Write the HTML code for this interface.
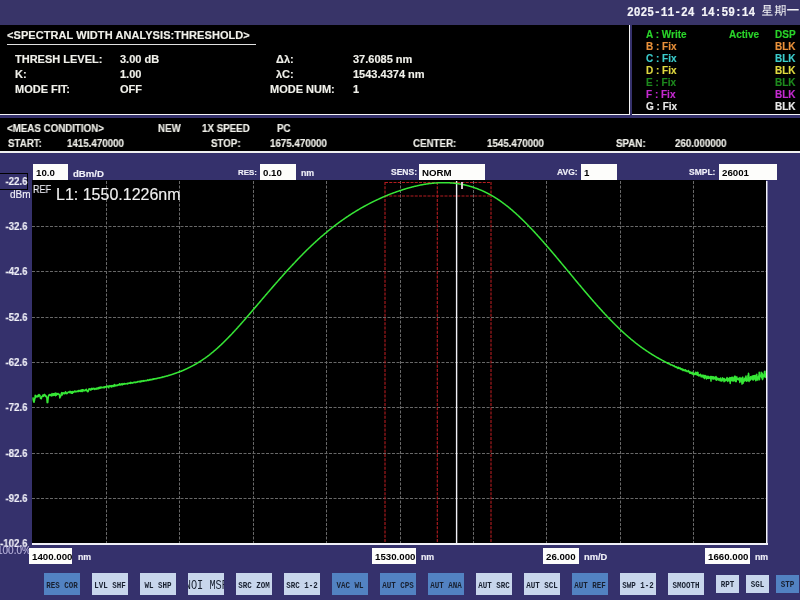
<!DOCTYPE html>
<html><head><meta charset="utf-8"><style>
html,body{margin:0;padding:0}
body{width:800px;height:600px;position:relative;overflow:hidden;background:#35316c;font-family:"Liberation Sans",sans-serif}
.t{position:absolute;white-space:nowrap;line-height:1.15;will-change:transform;-webkit-text-stroke:0.15px currentColor}
.box{position:absolute;will-change:transform;background:#fdfdfb;color:#000;font-weight:bold;padding-left:3px;box-sizing:border-box;white-space:nowrap;overflow:hidden}
.btn{position:absolute;will-change:transform;box-sizing:border-box;text-align:center;line-height:25px;font-family:"Liberation Mono",monospace;font-size:9.5px;font-weight:bold;color:#182030;white-space:nowrap;overflow:hidden}
.btn span{display:inline-block;transform:scaleX(0.79);transform-origin:50% 50%;margin:0 -20px}
</style></head><body>
<div style="position:absolute;left:0;top:0;width:800px;height:25px;background:#383468"></div>
<div class="t" style="left:626.5px;top:6px;font-size:11.25px;color:#f4f4f8;font-weight:bold;font-family:'Liberation Mono',monospace;transform:scaleY(1.1);transform-origin:0 0;">2025-11-24 14:59:14</div>
<svg style="position:absolute;left:761px;top:5px" width="40" height="12" viewBox="0 0 40 12">
<g fill="#f2f2f6">
<rect x="2.8" y="0.1" width="1" height="4.2"/><rect x="8.5" y="0.1" width="1" height="4.2"/>
<rect x="2.8" y="0.1" width="6.7" height="0.9"/><rect x="2.8" y="1.7" width="6.7" height="0.8"/><rect x="2.8" y="3.5" width="6.7" height="0.9"/>
<path d="M2.6 4.7 L3.6 5.0 L2.2 7.4 L1.3 7.0 Z"/>
<rect x="2.3" y="5.3" width="8.2" height="0.8"/><rect x="3" y="7.1" width="7" height="0.8"/><rect x="1.1" y="9.5" width="10.5" height="1.1"/>
<rect x="5.6" y="5" width="1" height="5"/>
<rect x="14.9" y="0.1" width="0.9" height="8.6"/><rect x="18.4" y="0.1" width="0.9" height="8.6"/>
<rect x="14.2" y="1.4" width="5.8" height="0.9"/><rect x="15.5" y="3.4" width="3" height="0.8"/><rect x="15.5" y="5.1" width="3" height="0.8"/><rect x="13.7" y="6.8" width="6.6" height="0.9"/>
<path d="M15.0 8.6 L15.9 8.8 L14.6 10.7 L13.8 10.3 Z"/><path d="M18.3 8.7 L19.1 8.5 L20.0 10.2 L19.2 10.6 Z"/>
<path d="M20.7 0.3 L21.6 0.3 L21.6 7.5 L20.5 10.9 L19.7 10.6 L20.7 7.4 Z"/>
<rect x="23.6" y="0.3" width="0.95" height="10.5"/>
<rect x="20.7" y="0.3" width="3.8" height="0.9"/><rect x="21.2" y="3.7" width="3" height="0.8"/><rect x="21.2" y="6.0" width="3" height="0.8"/>
<rect x="26.1" y="4.0" width="11.6" height="1.5"/>
</g></svg>
<div style="position:absolute;left:0;top:25px;width:629px;height:89px;background:#000"></div>
<div style="position:absolute;left:629px;top:25px;width:1px;height:90px;background:#f4f4f4"></div>
<div style="position:absolute;left:0;top:114px;width:630px;height:1px;background:#f4f4f4"></div>
<div style="position:absolute;left:632px;top:25px;width:168px;height:89px;background:#000"></div>
<div style="position:absolute;left:632px;top:114px;width:168px;height:1px;background:#f4f4f4"></div>
<div class="t" style="left:7px;top:28.5px;font-size:11px;color:#f0f0ea;font-weight:bold;letter-spacing:0.07px;">&lt;SPECTRAL WIDTH ANALYSIS:THRESHOLD&gt;</div>
<div style="position:absolute;left:7px;top:44px;width:249px;height:1px;background:#e0e0e0"></div>
<div class="t" style="left:15px;top:53px;font-size:11px;color:#f0f0ea;font-weight:bold;">THRESH LEVEL:</div>
<div class="t" style="left:120px;top:53px;font-size:11px;color:#f0f0ea;font-weight:bold;">3.00 dB</div>
<div class="t" style="left:15px;top:68px;font-size:11px;color:#f0f0ea;font-weight:bold;">K:</div>
<div class="t" style="left:120px;top:68px;font-size:11px;color:#f0f0ea;font-weight:bold;">1.00</div>
<div class="t" style="left:15px;top:83px;font-size:11px;color:#f0f0ea;font-weight:bold;">MODE FIT:</div>
<div class="t" style="left:120px;top:83px;font-size:11px;color:#f0f0ea;font-weight:bold;">OFF</div>
<div class="t" style="left:276px;top:53px;font-size:11px;color:#f0f0ea;font-weight:bold;">&Delta;&lambda;:</div>
<div class="t" style="left:353px;top:53px;font-size:11px;color:#f0f0ea;font-weight:bold;">37.6085 nm</div>
<div class="t" style="left:276px;top:68px;font-size:11px;color:#f0f0ea;font-weight:bold;">&lambda;C:</div>
<div class="t" style="left:353px;top:68px;font-size:11px;color:#f0f0ea;font-weight:bold;">1543.4374 nm</div>
<div class="t" style="left:270px;top:83px;font-size:11px;color:#f0f0ea;font-weight:bold;">MODE NUM:</div>
<div class="t" style="left:353px;top:83px;font-size:11px;color:#f0f0ea;font-weight:bold;">1</div>
<div class="t" style="left:646px;top:28.8px;font-size:10px;color:#2ad42a;font-weight:bold;">A : Write</div>
<div class="t" style="left:774.5px;top:28.8px;font-size:10px;color:#2ad42a;font-weight:bold;">DSP</div>
<div class="t" style="left:646px;top:40.8px;font-size:10px;color:#e8903a;font-weight:bold;">B : Fix</div>
<div class="t" style="left:774.5px;top:40.8px;font-size:10px;color:#e8903a;font-weight:bold;">BLK</div>
<div class="t" style="left:646px;top:52.8px;font-size:10px;color:#3ccccc;font-weight:bold;">C : Fix</div>
<div class="t" style="left:774.5px;top:52.8px;font-size:10px;color:#3ccccc;font-weight:bold;">BLK</div>
<div class="t" style="left:646px;top:64.8px;font-size:10px;color:#e0d840;font-weight:bold;">D : Fix</div>
<div class="t" style="left:774.5px;top:64.8px;font-size:10px;color:#e0d840;font-weight:bold;">BLK</div>
<div class="t" style="left:646px;top:76.8px;font-size:10px;color:#1e8a1e;font-weight:bold;">E : Fix</div>
<div class="t" style="left:774.5px;top:76.8px;font-size:10px;color:#1e8a1e;font-weight:bold;">BLK</div>
<div class="t" style="left:646px;top:88.8px;font-size:10px;color:#c42ad0;font-weight:bold;">F : Fix</div>
<div class="t" style="left:774.5px;top:88.8px;font-size:10px;color:#c42ad0;font-weight:bold;">BLK</div>
<div class="t" style="left:646px;top:100.8px;font-size:10px;color:#e8e8e8;font-weight:bold;">G : Fix</div>
<div class="t" style="left:774.5px;top:100.8px;font-size:10px;color:#e8e8e8;font-weight:bold;">BLK</div>
<div class="t" style="left:729px;top:28.8px;font-size:10px;color:#2ad42a;font-weight:bold;">Active</div>
<div style="position:absolute;left:0;top:118px;width:800px;height:33px;background:#000"></div>
<div style="position:absolute;left:0;top:151px;width:800px;height:1.5px;background:#f0f0f0"></div>
<div class="t" style="left:7px;top:121.5px;font-size:10.6px;color:#f0f0ea;font-weight:bold;transform:scaleX(0.92);transform-origin:0 0;">&lt;MEAS CONDITION&gt;</div>
<div class="t" style="left:158px;top:121.5px;font-size:10.6px;color:#f0f0ea;font-weight:bold;transform:scaleX(0.92);transform-origin:0 0;">NEW</div>
<div class="t" style="left:202px;top:121.5px;font-size:10.6px;color:#f0f0ea;font-weight:bold;transform:scaleX(0.92);transform-origin:0 0;">1X SPEED</div>
<div class="t" style="left:277px;top:121.5px;font-size:10.6px;color:#f0f0ea;font-weight:bold;transform:scaleX(0.92);transform-origin:0 0;">PC</div>
<div class="t" style="left:8px;top:137.0px;font-size:10.6px;color:#f0f0ea;font-weight:bold;transform:scaleX(0.92);transform-origin:0 0;">START:</div>
<div class="t" style="left:67px;top:137.0px;font-size:10.6px;color:#f0f0ea;font-weight:bold;transform:scaleX(0.92);transform-origin:0 0;">1415.470000</div>
<div class="t" style="left:211px;top:137.0px;font-size:10.6px;color:#f0f0ea;font-weight:bold;transform:scaleX(0.92);transform-origin:0 0;">STOP:</div>
<div class="t" style="left:270px;top:137.0px;font-size:10.6px;color:#f0f0ea;font-weight:bold;transform:scaleX(0.92);transform-origin:0 0;">1675.470000</div>
<div class="t" style="left:413px;top:137.0px;font-size:10.6px;color:#f0f0ea;font-weight:bold;transform:scaleX(0.92);transform-origin:0 0;">CENTER:</div>
<div class="t" style="left:487px;top:137.0px;font-size:10.6px;color:#f0f0ea;font-weight:bold;transform:scaleX(0.92);transform-origin:0 0;">1545.470000</div>
<div class="t" style="left:616px;top:137.0px;font-size:10.6px;color:#f0f0ea;font-weight:bold;transform:scaleX(0.92);transform-origin:0 0;">SPAN:</div>
<div class="t" style="left:675px;top:137.0px;font-size:10.6px;color:#f0f0ea;font-weight:bold;transform:scaleX(0.92);transform-origin:0 0;">260.000000</div>
<div class="box" style="left:33px;top:164px;width:35px;height:16px;font-size:9.7px;line-height:17.5px">10.0</div>
<div class="t" style="left:73px;top:168px;font-size:9.6px;color:#f0f0f8;font-weight:bold;">dBm/D</div>
<div class="t" style="left:238px;top:168px;font-size:7.9px;color:#f0f0f8;font-weight:bold;">RES:</div>
<div class="box" style="left:260px;top:164px;width:36px;height:16px;font-size:9.7px;line-height:17.5px">0.10</div>
<div class="t" style="left:301px;top:168px;font-size:8.8px;color:#f0f0f8;font-weight:bold;">nm</div>
<div class="t" style="left:391px;top:168px;font-size:8.5px;color:#f0f0f8;font-weight:bold;">SENS:</div>
<div class="box" style="left:419px;top:164px;width:66px;height:16px;font-size:9.7px;line-height:17.5px">NORM</div>
<div class="t" style="left:557px;top:168px;font-size:8.5px;color:#f0f0f8;font-weight:bold;">AVG:</div>
<div class="box" style="left:581px;top:164px;width:36px;height:16px;font-size:9.7px;line-height:17.5px">1</div>
<div class="t" style="left:689px;top:168px;font-size:8.5px;color:#f0f0f8;font-weight:bold;">SMPL:</div>
<div class="box" style="left:719px;top:164px;width:58px;height:16px;font-size:9.7px;line-height:17.5px">26001</div>
<div style="position:absolute;left:32px;top:180px;width:734px;height:363px;background:#000"></div>
<svg style="position:absolute;left:0;top:0" width="800" height="600">
<g stroke="#686868" stroke-width="1" stroke-dasharray="3 1.5" fill="none"><line x1="106.5" y1="181" x2="106.5" y2="543"/><line x1="179.5" y1="181" x2="179.5" y2="543"/><line x1="253.5" y1="181" x2="253.5" y2="543"/><line x1="326.5" y1="181" x2="326.5" y2="543"/><line x1="400.5" y1="181" x2="400.5" y2="543"/><line x1="473.5" y1="181" x2="473.5" y2="543"/><line x1="546.5" y1="181" x2="546.5" y2="543"/><line x1="620.5" y1="181" x2="620.5" y2="543"/><line x1="693.5" y1="181" x2="693.5" y2="543"/><line x1="32" y1="226.5" x2="766" y2="226.5"/><line x1="32" y1="271.5" x2="766" y2="271.5"/><line x1="32" y1="317.5" x2="766" y2="317.5"/><line x1="32" y1="362.5" x2="766" y2="362.5"/><line x1="32" y1="407.5" x2="766" y2="407.5"/><line x1="32" y1="453.5" x2="766" y2="453.5"/><line x1="32" y1="498.5" x2="766" y2="498.5"/></g>
<g stroke="#b41c20" stroke-width="1.1" stroke-dasharray="3 1.25" fill="none">
<line x1="385" y1="182.5" x2="491" y2="182.5"/><line x1="385" y1="196" x2="491" y2="196"/>
<line x1="385" y1="182" x2="385" y2="543"/><line x1="437.3" y1="182" x2="437.3" y2="543"/><line x1="491" y1="182" x2="491" y2="543"/>
</g>
<line x1="456.6" y1="181" x2="456.6" y2="543" stroke="#f0f0f6" stroke-width="1.4"/>
<polyline points="33.0,397.4 33.2,399.6 33.5,401.1 33.8,401.4 34.0,402.3 34.2,401.4 34.5,400.5 34.8,398.3 35.0,397.8 35.2,395.2 35.5,397.7 35.8,396.3 36.0,396.9 36.2,396.2 36.5,396.0 36.8,396.6 37.0,396.9 37.2,396.1 37.5,396.1 37.8,396.7 38.0,395.5 38.2,395.0 38.5,396.4 38.8,395.6 39.0,394.6 39.2,395.4 39.5,395.7 39.8,395.2 40.0,395.3 40.2,396.9 40.5,398.4 40.8,398.4 41.0,398.3 41.2,398.8 41.5,398.2 41.8,396.5 42.0,396.6 42.2,396.6 42.5,395.6 42.8,395.1 43.0,395.9 43.2,395.8 43.5,396.4 43.8,394.7 44.0,395.1 44.2,394.9 44.5,394.3 44.8,395.6 45.0,395.8 45.2,394.9 45.5,396.4 45.8,396.0 46.0,395.9 46.2,396.0 46.5,397.0 46.8,396.9 47.0,400.5 47.2,402.7 47.5,402.0 47.8,402.5 48.0,399.8 48.2,398.2 48.5,395.8 48.8,395.4 49.0,395.4 49.2,394.4 49.5,395.4 49.8,394.9 50.0,395.3 50.2,394.5 50.5,395.6 50.8,395.2 51.0,394.7 51.2,395.2 51.5,395.6 51.8,395.9 52.0,393.6 52.2,395.3 52.5,394.9 52.8,394.5 53.0,393.9 53.2,395.4 53.5,393.7 53.8,394.9 54.0,395.3 54.2,393.4 54.5,394.2 54.8,393.5 55.0,394.5 55.2,395.3 55.5,395.6 55.8,393.1 56.0,393.8 56.2,394.6 56.5,395.2 56.8,394.4 57.0,393.6 57.2,394.2 57.5,394.0 57.8,393.9 58.0,393.5 58.2,394.2 58.5,394.1 58.8,394.0 59.0,394.2 59.2,394.2 59.5,395.9 59.8,398.0 60.0,397.6 60.2,396.3 60.5,396.9 60.8,395.2 61.0,395.4 61.2,393.7 61.5,393.3 61.8,392.6 62.0,394.3 62.2,395.0 62.5,392.9 62.8,392.9 63.0,393.7 63.2,392.8 63.5,393.1 63.8,393.0 64.0,393.3 64.2,393.8 64.5,393.1 64.8,393.6 65.0,392.8 65.2,393.2 65.5,391.7 65.8,392.1 66.0,393.4 66.2,392.5 66.5,393.2 66.8,393.1 67.0,393.6 67.2,393.2 67.5,393.3 67.8,392.6 68.0,392.2 68.2,392.2 68.5,392.3 68.8,391.9 69.0,392.2 69.2,392.4 69.5,392.6 69.8,392.2 70.0,391.2 70.2,392.3 70.5,392.4 70.8,392.9 71.0,392.6 71.2,391.8 71.5,391.7 71.8,393.3 72.0,392.5 72.2,393.1 72.5,393.2 72.8,391.5 73.0,392.2 73.2,392.2 73.5,392.2 73.8,392.1 74.0,391.9 74.2,391.9 74.5,390.9 74.8,391.6 75.0,391.2 75.2,391.7 75.5,391.3 75.8,391.9 76.0,392.0 76.2,391.6 76.5,391.6 76.8,391.4 77.0,391.1 77.2,391.2 77.5,391.0 77.8,391.5 78.0,391.2 78.2,391.5 78.5,390.4 78.8,391.6 79.0,390.7 79.2,390.6 79.5,390.9 79.8,390.7 80.0,391.1 80.2,390.6 80.5,390.3 80.8,390.4 81.0,391.5 81.2,390.8 81.5,390.1 81.8,390.7 82.0,389.8 82.2,391.5 82.5,389.8 82.8,390.8 83.0,390.7 83.2,389.7 83.5,390.5 83.8,390.9 84.0,390.6 84.2,390.4 84.5,390.7 84.8,390.3 85.0,390.3 85.2,390.1 85.5,390.4 85.8,389.6 86.0,390.4 86.2,389.7 86.5,389.4 86.8,390.2 87.0,391.0 87.2,390.9 87.5,390.7 87.8,391.8 88.0,391.5 88.2,391.4 88.5,390.9 88.8,389.1 89.0,389.9 89.2,389.1 89.5,389.2 89.8,388.7 90.0,388.7 90.2,388.9 90.5,389.7 90.8,390.1 91.0,389.2 91.2,389.7 91.5,389.0 91.8,388.2 92.0,389.2 92.2,389.3 92.5,388.8 92.8,389.1 93.0,389.2 93.2,388.5 93.5,388.2 93.8,388.7 94.0,388.7 94.2,388.6 94.5,389.1 94.8,389.4 95.0,388.4 95.2,388.9 95.5,389.0 95.8,388.8 96.0,388.9 96.2,388.3 96.5,388.7 96.8,389.2 97.0,388.7 97.2,388.0 97.5,388.5 97.8,388.7 98.0,388.3 98.2,387.9 98.5,388.7 98.8,387.5 99.0,388.2 99.2,387.9 99.5,387.4 99.8,388.4 100.0,388.0 100.2,387.3 100.5,388.0 100.8,387.5 101.0,386.9 101.2,387.3 101.5,387.7 101.8,387.8 102.0,387.6 102.2,387.5 102.5,387.6 102.8,387.3 103.0,387.8 103.2,387.4 103.5,387.4 103.8,387.5 104.0,386.8 104.2,386.9 104.5,387.7 104.8,387.2 105.0,386.9 105.2,387.1 105.5,386.8 105.8,387.0 106.0,386.6 106.2,386.9 106.5,386.2 106.8,387.3 107.0,386.5 107.2,386.1 107.5,386.6 107.8,386.5 108.0,386.6 108.2,386.1 108.5,386.6 108.8,387.8 109.0,385.9 109.2,386.5 109.5,386.2 109.8,386.3 110.0,385.6 110.2,385.8 110.5,386.3 110.8,386.1 111.0,386.7 111.2,385.8 111.5,386.1 111.8,387.0 112.0,385.6 112.2,385.6 112.5,385.8 112.8,385.8 113.0,386.1 113.2,385.8 113.5,385.4 113.8,385.7 114.0,386.5 114.2,386.0 114.5,384.5 114.8,385.4 115.0,385.1 115.2,385.6 115.5,385.3 115.8,386.0 116.0,385.6 116.2,385.5 116.5,385.3 116.8,385.1 117.0,385.2 117.2,385.5 117.5,385.2 117.8,384.9 118.0,385.4 118.2,385.0 118.5,384.9 118.8,384.6 119.0,384.6 119.2,384.6 119.5,383.8 119.8,385.0 120.0,384.8 120.2,384.5 120.5,384.9 120.8,384.7 121.0,384.6 121.2,383.7 121.5,384.3 121.8,384.5 122.0,384.8 122.2,384.9 122.5,384.7 122.8,383.8 123.0,383.5 123.2,384.3 123.5,384.1 123.8,384.3 124.0,384.0 124.2,384.0 124.5,383.5 124.8,384.0 125.0,383.7 125.2,383.9 125.5,383.9 125.8,383.7 126.0,383.8 126.2,383.7 126.5,383.8 126.8,383.7 127.0,383.4 127.2,383.3 127.5,384.0 127.8,383.4 128.0,383.7 128.2,383.5 128.5,383.2 128.8,383.1 129.0,383.3 129.2,383.3 129.5,383.3 129.8,382.8 130.0,382.9 130.2,383.0 130.5,383.4 130.8,382.3 131.0,383.0 131.2,382.7 131.5,383.0 131.8,382.7 132.0,382.9 132.2,383.1 132.5,382.8 132.8,382.8 133.0,382.7 133.2,382.4 133.5,382.7 133.8,382.4 134.0,382.3 134.2,382.4 134.5,382.3 134.8,382.5 135.0,382.3 135.2,382.1 135.5,382.6 135.8,382.4 136.0,382.5 136.2,382.3 136.5,382.1 136.8,381.9 137.0,381.9 137.2,382.2 137.5,381.9 137.8,381.5 138.0,381.8 138.2,381.5 138.5,381.8 138.8,381.4 139.0,381.4 139.2,381.7 139.5,381.6 139.8,381.2 140.0,381.7 140.2,382.0 140.5,381.1 140.8,381.8 141.0,381.2 141.2,381.2 141.5,381.2 141.8,380.9 142.0,381.5 142.2,381.3 142.5,381.0 142.8,381.0 143.0,380.7 143.2,380.9 143.5,381.2 143.8,380.6 144.0,380.8 144.2,380.9 144.5,381.0 144.8,381.0 145.0,380.6 145.2,380.5 145.5,380.7 145.8,380.5 146.0,380.5 146.2,380.7 146.5,380.8 146.8,380.5 147.0,380.3 147.2,380.4 147.5,379.9 147.8,380.2 148.0,380.0 148.2,380.6 148.5,380.2 148.8,380.1 149.0,380.0 149.2,379.5 149.5,380.0 149.8,380.2 150.0,379.7 150.2,379.9 150.5,379.9 150.8,379.4 151.0,379.8 151.2,379.8 151.5,379.6 151.8,379.5 152.0,379.6 152.2,379.1 152.5,379.4 152.8,379.5 153.0,379.0 153.2,379.4 153.5,379.1 153.8,378.7 154.0,379.0 154.2,378.8 154.5,379.0 154.8,378.7 155.0,379.0 155.2,378.7 155.5,378.8 155.8,378.6 156.0,378.6 156.2,378.8 156.5,378.6 156.8,378.4 157.0,378.2 157.2,378.5 157.5,378.4 157.8,378.2 158.0,378.2 158.2,378.0 158.5,377.9 158.8,377.9 159.0,378.0 159.2,378.0 159.5,377.7 159.8,377.9 160.0,377.8 160.2,377.7 160.5,377.8 160.8,377.5 161.0,377.5 161.2,377.5 161.5,377.4 161.8,377.4 162.0,377.1 162.2,377.4 162.5,377.0 162.8,377.1 163.0,376.8 163.2,377.0 163.5,377.0 163.8,377.0 164.0,376.9 164.2,376.5 164.5,376.5 164.8,376.5 165.0,376.4 165.2,376.6 165.5,376.4 165.8,376.3 166.0,376.3 166.2,376.0 166.5,376.0 166.8,375.9 167.0,376.0 167.2,375.9 167.5,375.9 167.8,375.9 168.0,375.5 168.2,375.5 168.5,375.5 168.8,375.3 169.0,375.3 169.2,375.4 169.5,375.3 169.8,375.3 170.0,375.1 170.2,375.0 170.5,375.0 170.8,374.8 171.0,374.8 171.2,374.8 171.5,374.6 171.8,374.5 172.0,374.5 172.2,374.4 172.5,374.3 172.8,374.2 173.0,374.2 173.2,373.9 173.5,373.9 173.8,373.9 174.0,373.7 174.2,373.6 174.5,373.5 174.8,373.5 175.0,373.5 175.2,373.3 175.5,373.3 175.8,373.3 176.0,373.1 176.2,373.1 176.5,373.0 176.8,372.8 177.0,372.7 177.2,372.6 177.5,372.6 177.8,372.4 178.0,372.5 178.2,372.3 178.5,372.1 178.8,372.2 179.0,372.1 179.2,371.9 179.5,371.9 179.8,371.6 180.0,371.6 180.2,371.4 180.5,371.5 180.8,371.2 181.0,371.1 181.2,371.2 181.5,371.2 181.8,370.9 182.0,370.9 182.2,370.7 182.5,370.6 182.8,370.5 183.0,370.5 183.2,370.2 183.5,370.2 183.8,370.1 184.0,369.9 184.2,369.9 184.5,369.8 184.8,369.6 185.0,369.6 185.2,369.4 185.5,369.3 185.8,369.3 186.0,369.1 186.2,369.0 186.5,368.9 186.8,368.8 187.0,368.7 187.2,368.5 187.5,368.3 187.8,368.3 188.0,368.1 188.2,368.0 188.5,367.9 188.8,367.8 189.0,367.6 189.2,367.6 189.5,367.4 189.8,367.3 190.0,367.2 190.2,367.1 190.5,366.9 190.8,366.8 191.0,366.7 191.2,366.5 191.5,366.4 191.8,366.3 192.0,366.1 192.2,366.0 192.5,365.9 192.8,365.7 193.0,365.6 193.2,365.5 193.5,365.3 193.8,365.2 194.0,365.1 194.2,364.9 194.5,364.8 194.8,364.6 195.0,364.5 195.2,364.3 195.5,364.2 195.8,364.1 196.0,363.9 196.2,363.8 196.5,363.6 196.8,363.5 197.0,363.3 197.2,363.2 197.5,363.0 197.8,362.9 198.0,362.7 198.2,362.6 198.5,362.4 198.8,362.3 199.0,362.1 199.2,362.0 199.5,361.8 199.8,361.7 200.0,361.5 200.2,361.3 200.5,361.2 200.8,361.0 201.0,360.9 201.2,360.7 201.5,360.5 201.8,360.4 202.0,360.2 202.2,360.0 202.5,359.9 202.8,359.7 203.0,359.5 203.2,359.4 203.5,359.2 203.8,359.0 204.0,358.8 204.2,358.7 204.5,358.5 204.8,358.3 205.0,358.1 205.2,358.0 205.5,357.8 205.8,357.6 206.0,357.4 206.2,357.2 206.5,357.1 206.8,356.9 207.0,356.7 207.2,356.5 207.5,356.3 207.8,356.1 208.0,356.0 208.2,355.8 208.5,355.6 208.8,355.4 209.0,355.2 209.2,355.0 209.5,354.8 209.8,354.6 210.0,354.4 210.2,354.2 210.5,354.0 210.8,353.8 211.0,353.6 211.2,353.4 211.5,353.2 211.8,353.0 212.0,352.8 212.2,352.6 212.5,352.4 212.8,352.2 213.0,352.0 213.2,351.8 213.5,351.6 213.8,351.3 214.0,351.1 214.2,350.9 214.5,350.7 214.8,350.5 215.0,350.3 215.2,350.1 215.5,349.8 215.8,349.6 216.0,349.4 216.2,349.2 216.5,349.0 216.8,348.7 217.0,348.5 217.2,348.3 217.5,348.1 217.8,347.8 218.0,347.6 218.2,347.4 218.5,347.2 218.8,346.9 219.0,346.7 219.2,346.5 219.5,346.2 219.8,346.0 220.0,345.8 220.2,345.5 220.5,345.3 220.8,345.1 221.0,344.8 221.2,344.6 221.5,344.4 221.8,344.1 222.0,343.9 222.2,343.6 222.5,343.4 222.8,343.2 223.0,342.9 223.2,342.7 223.5,342.4 223.8,342.2 224.0,341.9 224.2,341.7 224.5,341.4 224.8,341.2 225.0,340.9 225.2,340.7 225.5,340.4 225.8,340.2 226.0,339.9 226.2,339.7 226.5,339.4 226.8,339.2 227.0,338.9 227.2,338.7 227.5,338.4 227.8,338.2 228.0,337.9 228.2,337.7 228.5,337.4 228.8,337.1 229.0,336.9 229.2,336.6 229.5,336.4 229.8,336.1 230.0,335.8 230.2,335.6 230.5,335.3 230.8,335.1 231.0,334.8 231.2,334.5 231.5,334.3 231.8,334.0 232.0,333.7 232.2,333.5 232.5,333.2 232.8,332.9 233.0,332.7 233.2,332.4 233.5,332.1 233.8,331.9 234.0,331.6 234.2,331.3 234.5,331.0 234.8,330.8 235.0,330.5 235.2,330.2 235.5,330.0 235.8,329.7 236.0,329.4 236.2,329.1 236.5,328.9 236.8,328.6 237.0,328.3 237.2,328.0 237.5,327.8 237.8,327.5 238.0,327.2 238.2,326.9 238.5,326.6 238.8,326.4 239.0,326.1 239.2,325.8 239.5,325.5 239.8,325.2 240.0,325.0 240.2,324.7 240.5,324.4 240.8,324.1 241.0,323.8 241.2,323.6 241.5,323.3 241.8,323.0 242.0,322.7 242.2,322.4 242.5,322.1 242.8,321.9 243.0,321.6 243.2,321.3 243.5,321.0 243.8,320.7 244.0,320.4 244.2,320.1 244.5,319.9 244.8,319.6 245.0,319.3 245.2,319.0 245.5,318.7 245.8,318.4 246.0,318.1 246.2,317.8 246.5,317.6 246.8,317.3 247.0,317.0 247.2,316.7 247.5,316.4 247.8,316.1 248.0,315.8 248.2,315.5 248.5,315.2 248.8,315.0 249.0,314.7 249.2,314.4 249.5,314.1 249.8,313.8 250.0,313.5 250.2,313.2 250.5,312.9 250.8,312.6 251.0,312.3 251.2,312.0 251.5,311.7 251.8,311.5 252.0,311.2 252.2,310.9 252.5,310.6 252.8,310.3 253.0,310.0 253.2,309.7 253.5,309.4 253.8,309.1 254.0,308.8 254.2,308.5 254.5,308.2 254.8,307.9 255.0,307.6 255.2,307.4 255.5,307.1 255.8,306.8 256.0,306.5 256.2,306.2 256.5,305.9 256.8,305.6 257.0,305.3 257.2,305.0 257.5,304.7 257.8,304.4 258.0,304.1 258.2,303.8 258.5,303.5 258.8,303.2 259.0,302.9 259.2,302.7 259.5,302.4 259.8,302.1 260.0,301.8 260.2,301.5 260.5,301.2 260.8,300.9 261.0,300.6 261.2,300.3 261.5,300.0 261.8,299.7 262.0,299.4 262.2,299.1 262.5,298.8 262.8,298.5 263.0,298.3 263.2,298.0 263.5,297.7 263.8,297.4 264.0,297.1 264.2,296.8 264.5,296.5 264.8,296.2 265.0,295.9 265.2,295.6 265.5,295.3 265.8,295.0 266.0,294.8 266.2,294.5 266.5,294.2 266.8,293.9 267.0,293.6 267.2,293.3 267.5,293.0 267.8,292.7 268.0,292.4 268.2,292.1 268.5,291.8 268.8,291.6 269.0,291.3 269.2,291.0 269.5,290.7 269.8,290.4 270.0,290.1 270.2,289.8 270.5,289.5 270.8,289.2 271.0,288.9 271.2,288.7 271.5,288.4 271.8,288.1 272.0,287.8 272.2,287.5 272.5,287.2 272.8,286.9 273.0,286.6 273.2,286.4 273.5,286.1 273.8,285.8 274.0,285.5 274.2,285.2 274.5,284.9 274.8,284.6 275.0,284.3 275.2,284.1 275.5,283.8 275.8,283.5 276.0,283.2 276.2,282.9 276.5,282.6 276.8,282.4 277.0,282.1 277.2,281.8 277.5,281.5 277.8,281.2 278.0,280.9 278.2,280.6 278.5,280.4 278.8,280.1 279.0,279.8 279.2,279.5 279.5,279.2 279.8,278.9 280.0,278.7 280.2,278.4 280.5,278.1 280.8,277.8 281.0,277.5 281.2,277.3 281.5,277.0 281.8,276.7 282.0,276.4 282.2,276.1 282.5,275.9 282.8,275.6 283.0,275.3 283.2,275.0 283.5,274.7 283.8,274.5 284.0,274.2 284.2,273.9 284.5,273.6 284.8,273.4 285.0,273.1 285.2,272.8 285.5,272.5 285.8,272.2 286.0,272.0 286.2,271.7 286.5,271.4 286.8,271.1 287.0,270.9 287.2,270.6 287.5,270.3 287.8,270.0 288.0,269.8 288.2,269.5 288.5,269.2 288.8,268.9 289.0,268.7 289.2,268.4 289.5,268.1 289.8,267.9 290.0,267.6 290.2,267.3 290.5,267.0 290.8,266.8 291.0,266.5 291.2,266.2 291.5,266.0 291.8,265.7 292.0,265.4 292.2,265.2 292.5,264.9 292.8,264.6 293.0,264.4 293.2,264.1 293.5,263.8 293.8,263.6 294.0,263.3 294.2,263.0 294.5,262.8 294.8,262.5 295.0,262.2 295.2,262.0 295.5,261.7 295.8,261.4 296.0,261.2 296.2,260.9 296.5,260.6 296.8,260.4 297.0,260.1 297.2,259.9 297.5,259.6 297.8,259.3 298.0,259.1 298.2,258.8 298.5,258.5 298.8,258.3 299.0,258.0 299.2,257.8 299.5,257.5 299.8,257.3 300.0,257.0 300.2,256.7 300.5,256.5 300.8,256.2 301.0,256.0 301.2,255.7 301.5,255.5 301.8,255.2 302.0,255.0 302.2,254.7 302.5,254.4 302.8,254.2 303.0,253.9 303.2,253.7 303.5,253.4 303.8,253.2 304.0,252.9 304.2,252.7 304.5,252.4 304.8,252.2 305.0,251.9 305.2,251.7 305.5,251.4 305.8,251.2 306.0,250.9 306.2,250.7 306.5,250.4 306.8,250.2 307.0,249.9 307.2,249.7 307.5,249.5 307.8,249.2 308.0,249.0 308.2,248.7 308.5,248.5 308.8,248.2 309.0,248.0 309.2,247.8 309.5,247.5 309.8,247.3 310.0,247.0 310.2,246.8 310.5,246.6 310.8,246.3 311.0,246.1 311.2,245.8 311.5,245.6 311.8,245.4 312.0,245.1 312.2,244.9 312.5,244.7 312.8,244.4 313.0,244.2 313.2,244.0 313.5,243.7 313.8,243.5 314.0,243.3 314.2,243.0 314.5,242.8 314.8,242.6 315.0,242.3 315.2,242.1 315.5,241.9 315.8,241.6 316.0,241.4 316.2,241.2 316.5,241.0 316.8,240.7 317.0,240.5 317.2,240.3 317.5,240.1 317.8,239.8 318.0,239.6 318.2,239.4 318.5,239.2 318.8,238.9 319.0,238.7 319.2,238.5 319.5,238.3 319.8,238.0 320.0,237.8 320.2,237.6 320.5,237.4 320.8,237.2 321.0,236.9 321.2,236.7 321.5,236.5 321.8,236.3 322.0,236.1 322.2,235.9 322.5,235.6 322.8,235.4 323.0,235.2 323.2,235.0 323.5,234.8 323.8,234.6 324.0,234.4 324.2,234.2 324.5,233.9 324.8,233.7 325.0,233.5 325.2,233.3 325.5,233.1 325.8,232.9 326.0,232.7 326.2,232.5 326.5,232.3 326.8,232.1 327.0,231.9 327.2,231.7 327.5,231.4 327.8,231.2 328.0,231.0 328.2,230.8 328.5,230.6 328.8,230.4 329.0,230.2 329.2,230.0 329.5,229.8 329.8,229.6 330.0,229.4 330.2,229.2 330.5,229.0 330.8,228.8 331.0,228.6 331.2,228.4 331.5,228.2 331.8,228.0 332.0,227.8 332.2,227.6 332.5,227.4 332.8,227.2 333.0,227.1 333.2,226.9 333.5,226.7 333.8,226.5 334.0,226.3 334.2,226.1 334.5,225.9 334.8,225.7 335.0,225.5 335.2,225.3 335.5,225.1 335.8,224.9 336.0,224.8 336.2,224.6 336.5,224.4 336.8,224.2 337.0,224.0 337.2,223.8 337.5,223.6 337.8,223.4 338.0,223.3 338.2,223.1 338.5,222.9 338.8,222.7 339.0,222.5 339.2,222.3 339.5,222.2 339.8,222.0 340.0,221.8 340.2,221.6 340.5,221.4 340.8,221.3 341.0,221.1 341.2,220.9 341.5,220.7 341.8,220.5 342.0,220.4 342.2,220.2 342.5,220.0 342.8,219.8 343.0,219.7 343.2,219.5 343.5,219.3 343.8,219.1 344.0,219.0 344.2,218.8 344.5,218.6 344.8,218.4 345.0,218.3 345.2,218.1 345.5,217.9 345.8,217.8 346.0,217.6 346.2,217.4 346.5,217.2 346.8,217.1 347.0,216.9 347.2,216.7 347.5,216.6 347.8,216.4 348.0,216.2 348.2,216.1 348.5,215.9 348.8,215.7 349.0,215.6 349.2,215.4 349.5,215.2 349.8,215.1 350.0,214.9 350.2,214.8 350.5,214.6 350.8,214.4 351.0,214.3 351.2,214.1 351.5,213.9 351.8,213.8 352.0,213.6 352.2,213.5 352.5,213.3 352.8,213.1 353.0,213.0 353.2,212.8 353.5,212.7 353.8,212.5 354.0,212.4 354.2,212.2 354.5,212.1 354.8,211.9 355.0,211.7 355.2,211.6 355.5,211.4 355.8,211.3 356.0,211.1 356.2,211.0 356.5,210.8 356.8,210.7 357.0,210.5 357.2,210.4 357.5,210.2 357.8,210.1 358.0,209.9 358.2,209.8 358.5,209.6 358.8,209.5 359.0,209.3 359.2,209.2 359.5,209.0 359.8,208.9 360.0,208.7 360.2,208.6 360.5,208.5 360.8,208.3 361.0,208.2 361.2,208.0 361.5,207.9 361.8,207.7 362.0,207.6 362.2,207.5 362.5,207.3 362.8,207.2 363.0,207.0 363.2,206.9 363.5,206.8 363.8,206.6 364.0,206.5 364.2,206.3 364.5,206.2 364.8,206.1 365.0,205.9 365.2,205.8 365.5,205.7 365.8,205.5 366.0,205.4 366.2,205.2 366.5,205.1 366.8,205.0 367.0,204.8 367.2,204.7 367.5,204.6 367.8,204.4 368.0,204.3 368.2,204.2 368.5,204.0 368.8,203.9 369.0,203.8 369.2,203.7 369.5,203.5 369.8,203.4 370.0,203.3 370.2,203.1 370.5,203.0 370.8,202.9 371.0,202.8 371.2,202.6 371.5,202.5 371.8,202.4 372.0,202.3 372.2,202.1 372.5,202.0 372.8,201.9 373.0,201.8 373.2,201.6 373.5,201.5 373.8,201.4 374.0,201.3 374.2,201.1 374.5,201.0 374.8,200.9 375.0,200.8 375.2,200.7 375.5,200.5 375.8,200.4 376.0,200.3 376.2,200.2 376.5,200.1 376.8,199.9 377.0,199.8 377.2,199.7 377.5,199.6 377.8,199.5 378.0,199.4 378.2,199.2 378.5,199.1 378.8,199.0 379.0,198.9 379.2,198.8 379.5,198.7 379.8,198.6 380.0,198.4 380.2,198.3 380.5,198.2 380.8,198.1 381.0,198.0 381.2,197.9 381.5,197.8 381.8,197.7 382.0,197.5 382.2,197.4 382.5,197.3 382.8,197.2 383.0,197.1 383.2,197.0 383.5,196.9 383.8,196.8 384.0,196.7 384.2,196.6 384.5,196.5 384.8,196.4 385.0,196.3 385.2,196.2 385.5,196.0 385.8,195.9 386.0,195.8 386.2,195.7 386.5,195.6 386.8,195.5 387.0,195.4 387.2,195.3 387.5,195.2 387.8,195.1 388.0,195.0 388.2,194.9 388.5,194.8 388.8,194.7 389.0,194.6 389.2,194.5 389.5,194.4 389.8,194.3 390.0,194.2 390.2,194.1 390.5,194.0 390.8,193.9 391.0,193.8 391.2,193.7 391.5,193.6 391.8,193.6 392.0,193.5 392.2,193.4 392.5,193.3 392.8,193.2 393.0,193.1 393.2,193.0 393.5,192.9 393.8,192.8 394.0,192.7 394.2,192.6 394.5,192.5 394.8,192.4 395.0,192.3 395.2,192.3 395.5,192.2 395.8,192.1 396.0,192.0 396.2,191.9 396.5,191.8 396.8,191.7 397.0,191.6 397.2,191.5 397.5,191.5 397.8,191.4 398.0,191.3 398.2,191.2 398.5,191.1 398.8,191.0 399.0,190.9 399.2,190.9 399.5,190.8 399.8,190.7 400.0,190.6 400.2,190.5 400.5,190.4 400.8,190.4 401.0,190.3 401.2,190.2 401.5,190.1 401.8,190.0 402.0,190.0 402.2,189.9 402.5,189.8 402.8,189.7 403.0,189.6 403.2,189.6 403.5,189.5 403.8,189.4 404.0,189.3 404.2,189.2 404.5,189.2 404.8,189.1 405.0,189.0 405.2,188.9 405.5,188.9 405.8,188.8 406.0,188.7 406.2,188.6 406.5,188.6 406.8,188.5 407.0,188.4 407.2,188.3 407.5,188.3 407.8,188.2 408.0,188.1 408.2,188.1 408.5,188.0 408.8,187.9 409.0,187.8 409.2,187.8 409.5,187.7 409.8,187.6 410.0,187.6 410.2,187.5 410.5,187.4 410.8,187.4 411.0,187.3 411.2,187.2 411.5,187.2 411.8,187.1 412.0,187.0 412.2,187.0 412.5,186.9 412.8,186.8 413.0,186.8 413.2,186.7 413.5,186.7 413.8,186.6 414.0,186.5 414.2,186.5 414.5,186.4 414.8,186.3 415.0,186.3 415.2,186.2 415.5,186.2 415.8,186.1 416.0,186.1 416.2,186.0 416.5,185.9 416.8,185.9 417.0,185.8 417.2,185.8 417.5,185.7 417.8,185.7 418.0,185.6 418.2,185.5 418.5,185.5 418.8,185.4 419.0,185.4 419.2,185.3 419.5,185.3 419.8,185.2 420.0,185.2 420.2,185.1 420.5,185.1 420.8,185.0 421.0,185.0 421.2,184.9 421.5,184.9 421.8,184.8 422.0,184.8 422.2,184.7 422.5,184.7 422.8,184.7 423.0,184.6 423.2,184.6 423.5,184.5 423.8,184.5 424.0,184.4 424.2,184.4 424.5,184.3 424.8,184.3 425.0,184.3 425.2,184.2 425.5,184.2 425.8,184.1 426.0,184.1 426.2,184.1 426.5,184.0 426.8,184.0 427.0,183.9 427.2,183.9 427.5,183.9 427.8,183.8 428.0,183.8 428.2,183.8 428.5,183.7 428.8,183.7 429.0,183.7 429.2,183.6 429.5,183.6 429.8,183.6 430.0,183.5 430.2,183.5 430.5,183.5 430.8,183.4 431.0,183.4 431.2,183.4 431.5,183.4 431.8,183.3 432.0,183.3 432.2,183.3 432.5,183.3 432.8,183.2 433.0,183.2 433.2,183.2 433.5,183.2 433.8,183.1 434.0,183.1 434.2,183.1 434.5,183.1 434.8,183.0 435.0,183.0 435.2,183.0 435.5,183.0 435.8,183.0 436.0,182.9 436.2,182.9 436.5,182.9 436.8,182.9 437.0,182.9 437.2,182.9 437.5,182.9 437.8,182.8 438.0,182.8 438.2,182.8 438.5,182.8 438.8,182.8 439.0,182.8 439.2,182.8 439.5,182.8 439.8,182.7 440.0,182.7 440.2,182.7 440.5,182.7 440.8,182.7 441.0,182.7 441.2,182.7 441.5,182.7 441.8,182.7 442.0,182.7 442.2,182.7 442.5,182.7 442.8,182.7 443.0,182.7 443.2,182.7 443.5,182.7 443.8,182.7 444.0,182.7 444.2,182.7 444.5,182.7 444.8,182.7 445.0,182.7 445.2,182.7 445.5,182.7 445.8,182.7 446.0,182.7 446.2,182.7 446.5,182.7 446.8,182.7 447.0,182.7 447.2,182.7 447.5,182.7 447.8,182.7 448.0,182.8 448.2,182.8 448.5,182.8 448.8,182.8 449.0,182.8 449.2,182.8 449.5,182.8 449.8,182.8 450.0,182.9 450.2,182.9 450.5,182.9 450.8,182.9 451.0,182.9 451.2,183.0 451.5,183.0 451.8,183.0 452.0,183.0 452.2,183.0 452.5,183.1 452.8,183.1 453.0,183.1 453.2,183.1 453.5,183.1 453.8,183.2 454.0,183.2 454.2,183.2 454.5,183.3 454.8,183.3 455.0,183.3 455.2,183.3 455.5,183.4 455.8,183.4 456.0,183.4 456.2,183.5 456.5,183.5 456.8,183.5 457.0,183.6 457.2,183.6 457.5,183.6 457.8,183.7 458.0,183.7 458.2,183.7 458.5,183.8 458.8,183.8 459.0,183.9 459.2,183.9 459.5,183.9 459.8,184.0 460.0,184.0 460.2,184.1 460.5,184.1 460.8,184.2 461.0,184.2 461.2,184.2 461.5,184.3 461.8,184.3 462.0,184.4 462.2,184.4 462.5,184.5 462.8,184.5 463.0,184.6 463.2,184.6 463.5,184.7 463.8,184.7 464.0,184.8 464.2,184.8 464.5,184.9 464.8,185.0 465.0,185.0 465.2,185.1 465.5,185.1 465.8,185.2 466.0,185.2 466.2,185.3 466.5,185.4 466.8,185.4 467.0,185.5 467.2,185.6 467.5,185.6 467.8,185.7 468.0,185.7 468.2,185.8 468.5,185.9 468.8,185.9 469.0,186.0 469.2,186.1 469.5,186.2 469.8,186.2 470.0,186.3 470.2,186.4 470.5,186.4 470.8,186.5 471.0,186.6 471.2,186.7 471.5,186.7 471.8,186.8 472.0,186.9 472.2,187.0 472.5,187.1 472.8,187.1 473.0,187.2 473.2,187.3 473.5,187.4 473.8,187.5 474.0,187.5 474.2,187.6 474.5,187.7 474.8,187.8 475.0,187.9 475.2,188.0 475.5,188.1 475.8,188.2 476.0,188.2 476.2,188.3 476.5,188.4 476.8,188.5 477.0,188.6 477.2,188.7 477.5,188.8 477.8,188.9 478.0,189.0 478.2,189.1 478.5,189.2 478.8,189.3 479.0,189.4 479.2,189.5 479.5,189.6 479.8,189.7 480.0,189.8 480.2,189.9 480.5,190.0 480.8,190.1 481.0,190.2 481.2,190.3 481.5,190.4 481.8,190.5 482.0,190.6 482.2,190.8 482.5,190.9 482.8,191.0 483.0,191.1 483.2,191.2 483.5,191.3 483.8,191.4 484.0,191.5 484.2,191.7 484.5,191.8 484.8,191.9 485.0,192.0 485.2,192.1 485.5,192.3 485.8,192.4 486.0,192.5 486.2,192.6 486.5,192.8 486.8,192.9 487.0,193.0 487.2,193.1 487.5,193.3 487.8,193.4 488.0,193.5 488.2,193.6 488.5,193.8 488.8,193.9 489.0,194.0 489.2,194.2 489.5,194.3 489.8,194.5 490.0,194.6 490.2,194.7 490.5,194.9 490.8,195.0 491.0,195.1 491.2,195.3 491.5,195.4 491.8,195.6 492.0,195.7 492.2,195.9 492.5,196.0 492.8,196.1 493.0,196.3 493.2,196.4 493.5,196.6 493.8,196.7 494.0,196.9 494.2,197.0 494.5,197.2 494.8,197.4 495.0,197.5 495.2,197.7 495.5,197.8 495.8,198.0 496.0,198.1 496.2,198.3 496.5,198.5 496.8,198.6 497.0,198.8 497.2,198.9 497.5,199.1 497.8,199.3 498.0,199.4 498.2,199.6 498.5,199.8 498.8,199.9 499.0,200.1 499.2,200.3 499.5,200.4 499.8,200.6 500.0,200.8 500.2,201.0 500.5,201.1 500.8,201.3 501.0,201.5 501.2,201.7 501.5,201.8 501.8,202.0 502.0,202.2 502.2,202.4 502.5,202.6 502.8,202.8 503.0,202.9 503.2,203.1 503.5,203.3 503.8,203.5 504.0,203.7 504.2,203.9 504.5,204.1 504.8,204.2 505.0,204.4 505.2,204.6 505.5,204.8 505.8,205.0 506.0,205.2 506.2,205.4 506.5,205.6 506.8,205.8 507.0,206.0 507.2,206.2 507.5,206.4 507.8,206.6 508.0,206.8 508.2,207.0 508.5,207.2 508.8,207.4 509.0,207.6 509.2,207.8 509.5,208.0 509.8,208.2 510.0,208.4 510.2,208.6 510.5,208.9 510.8,209.1 511.0,209.3 511.2,209.5 511.5,209.7 511.8,209.9 512.0,210.1 512.2,210.3 512.5,210.6 512.8,210.8 513.0,211.0 513.2,211.2 513.5,211.4 513.8,211.6 514.0,211.9 514.2,212.1 514.5,212.3 514.8,212.5 515.0,212.7 515.2,213.0 515.5,213.2 515.8,213.4 516.0,213.6 516.2,213.9 516.5,214.1 516.8,214.3 517.0,214.6 517.2,214.8 517.5,215.0 517.8,215.2 518.0,215.5 518.2,215.7 518.5,215.9 518.8,216.2 519.0,216.4 519.2,216.6 519.5,216.9 519.8,217.1 520.0,217.4 520.2,217.6 520.5,217.8 520.8,218.1 521.0,218.3 521.2,218.6 521.5,218.8 521.8,219.0 522.0,219.3 522.2,219.5 522.5,219.8 522.8,220.0 523.0,220.2 523.2,220.5 523.5,220.7 523.8,221.0 524.0,221.2 524.2,221.5 524.5,221.7 524.8,222.0 525.0,222.2 525.2,222.5 525.5,222.7 525.8,223.0 526.0,223.2 526.2,223.5 526.5,223.7 526.8,224.0 527.0,224.2 527.2,224.5 527.5,224.8 527.8,225.0 528.0,225.3 528.2,225.5 528.5,225.8 528.8,226.0 529.0,226.3 529.2,226.6 529.5,226.8 529.8,227.1 530.0,227.3 530.2,227.6 530.5,227.9 530.8,228.1 531.0,228.4 531.2,228.7 531.5,228.9 531.8,229.2 532.0,229.4 532.2,229.7 532.5,230.0 532.8,230.2 533.0,230.5 533.2,230.8 533.5,231.0 533.8,231.3 534.0,231.6 534.2,231.8 534.5,232.1 534.8,232.4 535.0,232.7 535.2,232.9 535.5,233.2 535.8,233.5 536.0,233.7 536.2,234.0 536.5,234.3 536.8,234.6 537.0,234.8 537.2,235.1 537.5,235.4 537.8,235.7 538.0,235.9 538.2,236.2 538.5,236.5 538.8,236.8 539.0,237.1 539.2,237.3 539.5,237.6 539.8,237.9 540.0,238.2 540.2,238.4 540.5,238.7 540.8,239.0 541.0,239.3 541.2,239.6 541.5,239.8 541.8,240.1 542.0,240.4 542.2,240.7 542.5,241.0 542.8,241.3 543.0,241.5 543.2,241.8 543.5,242.1 543.8,242.4 544.0,242.7 544.2,243.0 544.5,243.3 544.8,243.5 545.0,243.8 545.2,244.1 545.5,244.4 545.8,244.7 546.0,245.0 546.2,245.3 546.5,245.6 546.8,245.8 547.0,246.1 547.2,246.4 547.5,246.7 547.8,247.0 548.0,247.3 548.2,247.6 548.5,247.9 548.8,248.2 549.0,248.4 549.2,248.7 549.5,249.0 549.8,249.3 550.0,249.6 550.2,249.9 550.5,250.2 550.8,250.5 551.0,250.8 551.2,251.1 551.5,251.4 551.8,251.7 552.0,252.0 552.2,252.3 552.5,252.6 552.8,252.8 553.0,253.1 553.2,253.4 553.5,253.7 553.8,254.0 554.0,254.3 554.2,254.6 554.5,254.9 554.8,255.2 555.0,255.5 555.2,255.8 555.5,256.1 555.8,256.4 556.0,256.7 556.2,257.0 556.5,257.3 556.8,257.6 557.0,257.9 557.2,258.2 557.5,258.5 557.8,258.8 558.0,259.1 558.2,259.4 558.5,259.7 558.8,260.0 559.0,260.3 559.2,260.6 559.5,260.9 559.8,261.2 560.0,261.5 560.2,261.8 560.5,262.1 560.8,262.4 561.0,262.7 561.2,263.0 561.5,263.3 561.8,263.6 562.0,263.9 562.2,264.2 562.5,264.5 562.8,264.8 563.0,265.1 563.2,265.4 563.5,265.7 563.8,266.0 564.0,266.3 564.2,266.6 564.5,266.9 564.8,267.2 565.0,267.5 565.2,267.8 565.5,268.1 565.8,268.4 566.0,268.7 566.2,269.0 566.5,269.3 566.8,269.6 567.0,269.9 567.2,270.2 567.5,270.5 567.8,270.8 568.0,271.1 568.2,271.4 568.5,271.7 568.8,272.0 569.0,272.3 569.2,272.6 569.5,272.9 569.8,273.2 570.0,273.5 570.2,273.8 570.5,274.1 570.8,274.4 571.0,274.7 571.2,275.0 571.5,275.3 571.8,275.6 572.0,275.9 572.2,276.2 572.5,276.5 572.8,276.8 573.0,277.1 573.2,277.4 573.5,277.7 573.8,278.0 574.0,278.3 574.2,278.7 574.5,279.0 574.8,279.3 575.0,279.6 575.2,279.9 575.5,280.2 575.8,280.5 576.0,280.8 576.2,281.1 576.5,281.4 576.8,281.7 577.0,282.0 577.2,282.3 577.5,282.6 577.8,282.9 578.0,283.2 578.2,283.5 578.5,283.8 578.8,284.1 579.0,284.4 579.2,284.7 579.5,285.0 579.8,285.2 580.0,285.5 580.2,285.8 580.5,286.1 580.8,286.4 581.0,286.7 581.2,287.0 581.5,287.3 581.8,287.6 582.0,287.9 582.2,288.2 582.5,288.5 582.8,288.8 583.0,289.1 583.2,289.4 583.5,289.7 583.8,290.0 584.0,290.3 584.2,290.6 584.5,290.9 584.8,291.2 585.0,291.5 585.2,291.8 585.5,292.1 585.8,292.4 586.0,292.7 586.2,293.0 586.5,293.2 586.8,293.5 587.0,293.8 587.2,294.1 587.5,294.4 587.8,294.7 588.0,295.0 588.2,295.3 588.5,295.6 588.8,295.9 589.0,296.2 589.2,296.5 589.5,296.7 589.8,297.0 590.0,297.3 590.2,297.6 590.5,297.9 590.8,298.2 591.0,298.5 591.2,298.8 591.5,299.1 591.8,299.3 592.0,299.6 592.2,299.9 592.5,300.2 592.8,300.5 593.0,300.8 593.2,301.1 593.5,301.4 593.8,301.6 594.0,301.9 594.2,302.2 594.5,302.5 594.8,302.8 595.0,303.1 595.2,303.3 595.5,303.6 595.8,303.9 596.0,304.2 596.2,304.5 596.5,304.8 596.8,305.0 597.0,305.3 597.2,305.6 597.5,305.9 597.8,306.2 598.0,306.4 598.2,306.7 598.5,307.0 598.8,307.3 599.0,307.6 599.2,307.8 599.5,308.1 599.8,308.4 600.0,308.7 600.2,308.9 600.5,309.2 600.8,309.5 601.0,309.8 601.2,310.0 601.5,310.3 601.8,310.6 602.0,310.9 602.2,311.1 602.5,311.4 602.8,311.7 603.0,312.0 603.2,312.2 603.5,312.5 603.8,312.8 604.0,313.0 604.2,313.3 604.5,313.6 604.8,313.8 605.0,314.1 605.2,314.4 605.5,314.6 605.8,314.9 606.0,315.2 606.2,315.4 606.5,315.7 606.8,316.0 607.0,316.2 607.2,316.5 607.5,316.8 607.8,317.0 608.0,317.3 608.2,317.6 608.5,317.8 608.8,318.1 609.0,318.3 609.2,318.6 609.5,318.9 609.8,319.1 610.0,319.4 610.2,319.6 610.5,319.9 610.8,320.2 611.0,320.4 611.2,320.7 611.5,320.9 611.8,321.2 612.0,321.4 612.2,321.7 612.5,321.9 612.8,322.2 613.0,322.5 613.2,322.7 613.5,323.0 613.8,323.2 614.0,323.5 614.2,323.7 614.5,324.0 614.8,324.2 615.0,324.5 615.2,324.7 615.5,325.0 615.8,325.2 616.0,325.5 616.2,325.7 616.5,325.9 616.8,326.2 617.0,326.4 617.2,326.7 617.5,326.9 617.8,327.2 618.0,327.4 618.2,327.7 618.5,327.9 618.8,328.1 619.0,328.4 619.2,328.6 619.5,328.9 619.8,329.1 620.0,329.3 620.2,329.6 620.5,329.8 620.8,330.0 621.0,330.3 621.2,330.5 621.5,330.7 621.8,331.0 622.0,331.2 622.2,331.4 622.5,331.7 622.8,331.9 623.0,332.1 623.2,332.4 623.5,332.6 623.8,332.8 624.0,333.0 624.2,333.3 624.5,333.5 624.8,333.7 625.0,334.0 625.2,334.2 625.5,334.4 625.8,334.6 626.0,334.8 626.2,335.1 626.5,335.3 626.8,335.5 627.0,335.7 627.2,336.0 627.5,336.2 627.8,336.4 628.0,336.6 628.2,336.8 628.5,337.0 628.8,337.3 629.0,337.5 629.2,337.7 629.5,337.9 629.8,338.1 630.0,338.3 630.2,338.5 630.5,338.7 630.8,339.0 631.0,339.2 631.2,339.4 631.5,339.6 631.8,339.8 632.0,340.0 632.2,340.2 632.5,340.4 632.8,340.6 633.0,340.8 633.2,341.0 633.5,341.2 633.8,341.4 634.0,341.6 634.2,341.8 634.5,342.0 634.8,342.2 635.0,342.4 635.2,342.6 635.5,342.8 635.8,343.0 636.0,343.2 636.2,343.4 636.5,343.6 636.8,343.8 637.0,344.0 637.2,344.2 637.5,344.4 637.8,344.6 638.0,344.7 638.2,344.9 638.5,345.1 638.8,345.3 639.0,345.5 639.2,345.7 639.5,345.9 639.8,346.1 640.0,346.2 640.2,346.4 640.5,346.6 640.8,346.8 641.0,347.0 641.2,347.2 641.5,347.3 641.8,347.5 642.0,347.7 642.2,347.9 642.5,348.1 642.8,348.2 643.0,348.4 643.2,348.6 643.5,348.8 643.8,348.9 644.0,349.1 644.2,349.3 644.5,349.5 644.8,349.6 645.0,349.8 645.2,350.0 645.5,350.2 645.8,350.3 646.0,350.5 646.2,350.7 646.5,350.8 646.8,351.0 647.0,351.2 647.2,351.3 647.5,351.5 647.8,351.7 648.0,351.8 648.2,352.0 648.5,352.2 648.8,352.3 649.0,352.5 649.2,352.7 649.5,352.8 649.8,353.0 650.0,353.1 650.2,353.3 650.5,353.5 650.8,353.6 651.0,353.8 651.2,353.9 651.5,354.1 651.8,354.3 652.0,354.4 652.2,354.6 652.5,354.7 652.8,354.9 653.0,355.0 653.2,355.2 653.5,355.3 653.8,355.5 654.0,355.6 654.2,355.8 654.5,355.9 654.8,356.1 655.0,356.2 655.2,356.4 655.5,356.5 655.8,356.7 656.0,356.8 656.2,357.0 656.5,357.1 656.8,357.3 657.0,357.4 657.2,357.6 657.5,357.7 657.8,357.8 658.0,358.0 658.2,358.1 658.5,358.3 658.8,358.4 659.0,358.6 659.2,358.7 659.5,358.8 659.8,359.0 660.0,359.1 660.2,359.2 660.5,359.4 660.8,359.5 661.0,359.7 661.2,359.8 661.5,359.9 661.8,360.1 662.0,360.2 662.2,360.3 662.5,360.5 662.8,360.5 663.0,360.7 663.2,360.8 663.5,361.1 663.8,361.1 664.0,361.3 664.2,361.4 664.5,361.5 664.8,361.6 665.0,361.8 665.2,361.9 665.5,362.2 665.8,362.2 666.0,362.3 666.2,362.4 666.5,362.5 666.8,362.7 667.0,362.9 667.2,363.2 667.5,362.9 667.8,363.2 668.0,363.4 668.2,363.3 668.5,363.4 668.8,363.6 669.0,363.4 669.2,364.0 669.5,364.0 669.8,364.1 670.0,364.2 670.2,364.4 670.5,364.9 670.8,364.6 671.0,364.8 671.2,364.7 671.5,365.0 671.8,365.0 672.0,365.1 672.2,365.1 672.5,365.2 672.8,365.6 673.0,365.8 673.2,365.8 673.5,365.7 673.8,366.0 674.0,365.5 674.2,366.4 674.5,366.3 674.8,366.5 675.0,366.8 675.2,366.5 675.5,367.0 675.8,366.7 676.0,367.1 676.2,366.9 676.5,367.2 676.8,367.7 677.0,367.2 677.2,367.3 677.5,367.5 677.8,367.8 678.0,368.6 678.2,367.7 678.5,367.3 678.8,367.9 679.0,367.7 679.2,368.1 679.5,368.4 679.8,368.2 680.0,368.4 680.2,368.0 680.5,368.9 680.8,368.6 681.0,369.4 681.2,369.5 681.5,368.9 681.8,369.1 682.0,369.4 682.2,369.8 682.5,368.9 682.8,369.6 683.0,370.5 683.2,369.8 683.5,370.0 683.8,370.0 684.0,369.6 684.2,370.6 684.5,370.4 684.8,370.5 685.0,370.8 685.2,370.9 685.5,369.8 685.8,371.0 686.0,370.6 686.2,371.0 686.5,370.7 686.8,370.7 687.0,371.7 687.2,371.3 687.5,371.2 687.8,371.3 688.0,371.6 688.2,371.6 688.5,370.5 688.8,371.4 689.0,371.8 689.2,372.4 689.5,372.8 689.8,371.7 690.0,373.3 690.2,372.4 690.5,372.7 690.8,372.2 691.0,372.2 691.2,373.4 691.5,372.6 691.8,372.7 692.0,373.5 692.2,374.0 692.5,372.2 692.8,373.0 693.0,373.2 693.2,374.4 693.5,374.8 693.8,373.4 694.0,373.7 694.2,374.1 694.5,374.4 694.8,373.5 695.0,374.3 695.2,373.4 695.5,372.2 695.8,373.1 696.0,374.2 696.2,374.7 696.5,372.7 696.8,373.1 697.0,374.4 697.2,372.2 697.5,374.9 697.8,375.3 698.0,372.6 698.2,375.3 698.5,374.7 698.8,375.9 699.0,375.1 699.2,374.8 699.5,375.2 699.8,375.8 700.0,375.3 700.2,375.3 700.5,374.3 700.8,375.8 701.0,375.5 701.2,376.9 701.5,375.6 701.8,375.6 702.0,375.2 702.2,376.3 702.5,375.7 702.8,375.3 703.0,377.2 703.2,377.4 703.5,375.7 703.8,375.3 704.0,377.1 704.2,375.6 704.5,378.6 704.8,376.3 705.0,377.2 705.2,375.4 705.5,376.5 705.8,377.5 706.0,377.0 706.2,376.2 706.5,378.9 706.8,377.5 707.0,376.7 707.2,376.4 707.5,376.7 707.8,378.2 708.0,376.4 708.2,377.2 708.5,376.4 708.8,378.4 709.0,377.1 709.2,378.1 709.5,377.9 709.8,376.9 710.0,378.1 710.2,378.4 710.5,376.5 710.8,378.3 711.0,381.1 711.2,377.4 711.5,378.4 711.8,376.5 712.0,378.3 712.2,377.3 712.5,378.7 712.8,377.9 713.0,376.8 713.2,379.2 713.5,377.9 713.8,377.1 714.0,378.3 714.2,377.2 714.5,378.7 714.8,378.3 715.0,378.0 715.2,379.1 715.5,377.1 715.8,379.5 716.0,376.4 716.2,380.3 716.5,378.8 716.8,378.3 717.0,377.9 717.2,379.3 717.5,378.6 717.8,378.6 718.0,379.9 718.2,378.4 718.5,378.6 718.8,379.4 719.0,380.1 719.2,378.8 719.5,379.2 719.8,379.1 720.0,379.9 720.2,380.8 720.5,378.0 720.8,379.0 721.0,379.1 721.2,379.9 721.5,381.0 721.8,379.2 722.0,379.5 722.2,380.7 722.5,377.8 722.8,378.4 723.0,378.8 723.2,379.4 723.5,379.7 723.8,378.8 724.0,381.7 724.2,378.6 724.5,379.3 724.8,380.9 725.0,380.5 725.2,379.6 725.5,380.1 725.8,380.7 726.0,379.6 726.2,380.5 726.5,378.5 726.8,379.8 727.0,377.6 727.2,378.6 727.5,378.2 727.8,381.4 728.0,379.1 728.2,380.2 728.5,378.5 728.8,379.5 729.0,379.4 729.2,378.7 729.5,381.0 729.8,377.6 730.0,380.7 730.2,383.5 730.5,378.7 730.8,379.9 731.0,377.7 731.2,379.8 731.5,377.4 731.8,380.8 732.0,379.2 732.2,377.2 732.5,378.0 732.8,377.6 733.0,379.5 733.2,381.1 733.5,379.3 733.8,378.1 734.0,378.6 734.2,380.0 734.5,376.3 734.8,380.7 735.0,380.4 735.2,376.2 735.5,381.6 735.8,377.3 736.0,379.5 736.2,381.6 736.5,377.3 736.8,376.9 737.0,378.0 737.2,378.1 737.5,379.5 737.8,378.9 738.0,378.9 738.2,378.9 738.5,379.4 738.8,378.3 739.0,380.2 739.2,379.6 739.5,378.0 739.8,382.5 740.0,377.6 740.2,380.7 740.5,378.4 740.8,380.1 741.0,380.4 741.2,380.9 741.5,381.8 741.8,378.1 742.0,384.1 742.2,380.1 742.5,378.1 742.8,377.1 743.0,383.3 743.2,382.1 743.5,379.3 743.8,380.6 744.0,381.5 744.2,379.4 744.5,378.5 744.8,379.2 745.0,380.6 745.2,379.2 745.5,377.0 745.8,380.4 746.0,376.1 746.2,377.7 746.5,381.2 746.8,379.4 747.0,379.3 747.2,379.1 747.5,380.7 747.8,378.7 748.0,375.3 748.2,379.2 748.5,373.2 748.8,375.0 749.0,381.5 749.2,380.5 749.5,377.7 749.8,378.4 750.0,378.6 750.2,380.2 750.5,376.9 750.8,376.7 751.0,377.1 751.2,378.5 751.5,378.7 751.8,377.4 752.0,379.5 752.2,376.1 752.5,377.8 752.8,376.6 753.0,376.0 753.2,380.1 753.5,377.1 753.8,375.8 754.0,377.7 754.2,375.7 754.5,378.7 754.8,379.1 755.0,379.4 755.2,375.3 755.5,377.0 755.8,380.8 756.0,376.7 756.2,379.6 756.5,380.0 756.8,374.3 757.0,379.3 757.2,378.3 757.5,378.5 757.8,380.1 758.0,377.6 758.2,376.7 758.5,377.7 758.8,375.7 759.0,377.4 759.2,372.2 759.5,379.7 759.8,375.1 760.0,377.2 760.2,376.6 760.5,376.1 760.8,376.1 761.0,375.9 761.2,372.3 761.5,374.5 761.8,377.9 762.0,373.3 762.2,373.2 762.5,379.6 762.8,377.6 763.0,378.3 763.2,375.0 763.5,375.4 763.8,376.4 764.0,375.9 764.2,374.4 764.5,371.5 764.8,372.9 765.0,371.3 765.2,377.5 765.5,373.3" fill="none" stroke="#36e636" stroke-width="1.5" stroke-linejoin="round"/>
<rect x="461" y="182" width="2" height="7" fill="#d8c8d0"/>
<rect x="766" y="181" width="1.5" height="364" fill="#f0f0f8"/>
<rect x="32" y="543" width="736" height="2" fill="#f0f0f8"/>
</svg>
<div class="t" style="left:33px;top:183.5px;font-size:10px;color:#f0f0f8;font-weight:normal;transform:scaleX(0.9);transform-origin:0 0;">REF</div>
<div class="t" style="left:56px;top:185.5px;font-size:16px;color:#f0f0f0;font-weight:normal;">L1: 1550.1226nm</div>
<div style="position:absolute;left:-2px;top:173px;width:28px;height:14.5px;border:1.5px solid #000"></div>
<div class="t" style="right:772.5px;top:175.4px;font-size:10.8px;color:#f0f0f8;font-weight:bold;text-align:right;transform:scaleX(0.9);transform-origin:100% 0">-22.6</div>
<div class="t" style="right:772.5px;top:220.0px;font-size:10.8px;color:#f0f0f8;font-weight:bold;text-align:right;transform:scaleX(0.9);transform-origin:100% 0">-32.6</div>
<div class="t" style="right:772.5px;top:265.4px;font-size:10.8px;color:#f0f0f8;font-weight:bold;text-align:right;transform:scaleX(0.9);transform-origin:100% 0">-42.6</div>
<div class="t" style="right:772.5px;top:310.7px;font-size:10.8px;color:#f0f0f8;font-weight:bold;text-align:right;transform:scaleX(0.9);transform-origin:100% 0">-52.6</div>
<div class="t" style="right:772.5px;top:356.0px;font-size:10.8px;color:#f0f0f8;font-weight:bold;text-align:right;transform:scaleX(0.9);transform-origin:100% 0">-62.6</div>
<div class="t" style="right:772.5px;top:401.3px;font-size:10.8px;color:#f0f0f8;font-weight:bold;text-align:right;transform:scaleX(0.9);transform-origin:100% 0">-72.6</div>
<div class="t" style="right:772.5px;top:446.7px;font-size:10.8px;color:#f0f0f8;font-weight:bold;text-align:right;transform:scaleX(0.9);transform-origin:100% 0">-82.6</div>
<div class="t" style="right:772.5px;top:492.0px;font-size:10.8px;color:#f0f0f8;font-weight:bold;text-align:right;transform:scaleX(0.9);transform-origin:100% 0">-92.6</div>
<div class="t" style="right:772.5px;top:537.0px;font-size:10.8px;color:#f0f0f8;font-weight:bold;text-align:right;transform:scaleX(0.9);transform-origin:100% 0">-102.6</div>
<div class="t" style="left:9.5px;top:189px;font-size:10px;color:#f0f0f8;font-weight:normal;">dBm</div>
<div class="t" style="left:-3px;top:545px;font-size:10px;color:#b8b2dc;font-weight:normal;">100.0%</div>
<div class="box" style="left:29px;top:548px;width:43px;height:16px;font-size:9.7px;line-height:17.5px">1400.000</div>
<div class="t" style="left:78px;top:551.5px;font-size:8.8px;color:#f0f0f8;font-weight:bold;">nm</div>
<div class="box" style="left:372px;top:548px;width:44px;height:16px;font-size:9.7px;line-height:17.5px">1530.000</div>
<div class="t" style="left:421px;top:551.5px;font-size:8.8px;color:#f0f0f8;font-weight:bold;">nm</div>
<div class="box" style="left:543px;top:548px;width:36px;height:16px;font-size:9.7px;line-height:17.5px">26.000</div>
<div class="t" style="left:584px;top:551.5px;font-size:9.3px;color:#f0f0f8;font-weight:bold;">nm/D</div>
<div class="box" style="left:705px;top:548px;width:45px;height:16px;font-size:9.7px;line-height:17.5px">1660.000</div>
<div class="t" style="left:755px;top:551.5px;font-size:8.8px;color:#f0f0f8;font-weight:bold;">nm</div>
<div class="btn" style="left:43.6px;top:573px;width:36px;height:22px;background:#5282c2"><span>RES COR</span></div>
<div class="btn" style="left:91.6px;top:573px;width:36px;height:22px;background:#c8d6ec"><span>LVL SHF</span></div>
<div class="btn" style="left:139.6px;top:573px;width:36px;height:22px;background:#c8d6ec"><span>WL SHP</span></div>
<div class="btn" style="left:187.6px;top:573px;width:36px;height:22px;background:#c8d6ec;font-size:13px;font-weight:normal"><span>NOI MSR</span></div>
<div class="btn" style="left:235.6px;top:573px;width:36px;height:22px;background:#c8d6ec"><span>SRC ZOM</span></div>
<div class="btn" style="left:283.6px;top:573px;width:36px;height:22px;background:#c8d6ec"><span>SRC 1-2</span></div>
<div class="btn" style="left:331.6px;top:573px;width:36px;height:22px;background:#5282c2"><span>VAC WL</span></div>
<div class="btn" style="left:379.6px;top:573px;width:36px;height:22px;background:#5282c2"><span>AUT CPS</span></div>
<div class="btn" style="left:427.6px;top:573px;width:36px;height:22px;background:#5282c2"><span>AUT ANA</span></div>
<div class="btn" style="left:475.6px;top:573px;width:36px;height:22px;background:#c8d6ec"><span>AUT SRC</span></div>
<div class="btn" style="left:523.6px;top:573px;width:36px;height:22px;background:#c8d6ec"><span>AUT SCL</span></div>
<div class="btn" style="left:571.6px;top:573px;width:36px;height:22px;background:#5282c2"><span>AUT REF</span></div>
<div class="btn" style="left:619.6px;top:573px;width:36px;height:22px;background:#c8d6ec"><span>SWP 1-2</span></div>
<div class="btn" style="left:667.6px;top:573px;width:36px;height:22px;background:#c8d6ec"><span>SMOOTH</span></div>
<div class="btn" style="left:716px;top:575px;width:23px;height:18px;line-height:20px;background:#c8d6ec"><span>RPT</span></div>
<div class="btn" style="left:746px;top:575px;width:23px;height:18px;line-height:20px;background:#c8d6ec"><span>SGL</span></div>
<div class="btn" style="left:776px;top:575px;width:23px;height:18px;line-height:20px;background:#5282c2"><span>STP</span></div>
</body></html>
